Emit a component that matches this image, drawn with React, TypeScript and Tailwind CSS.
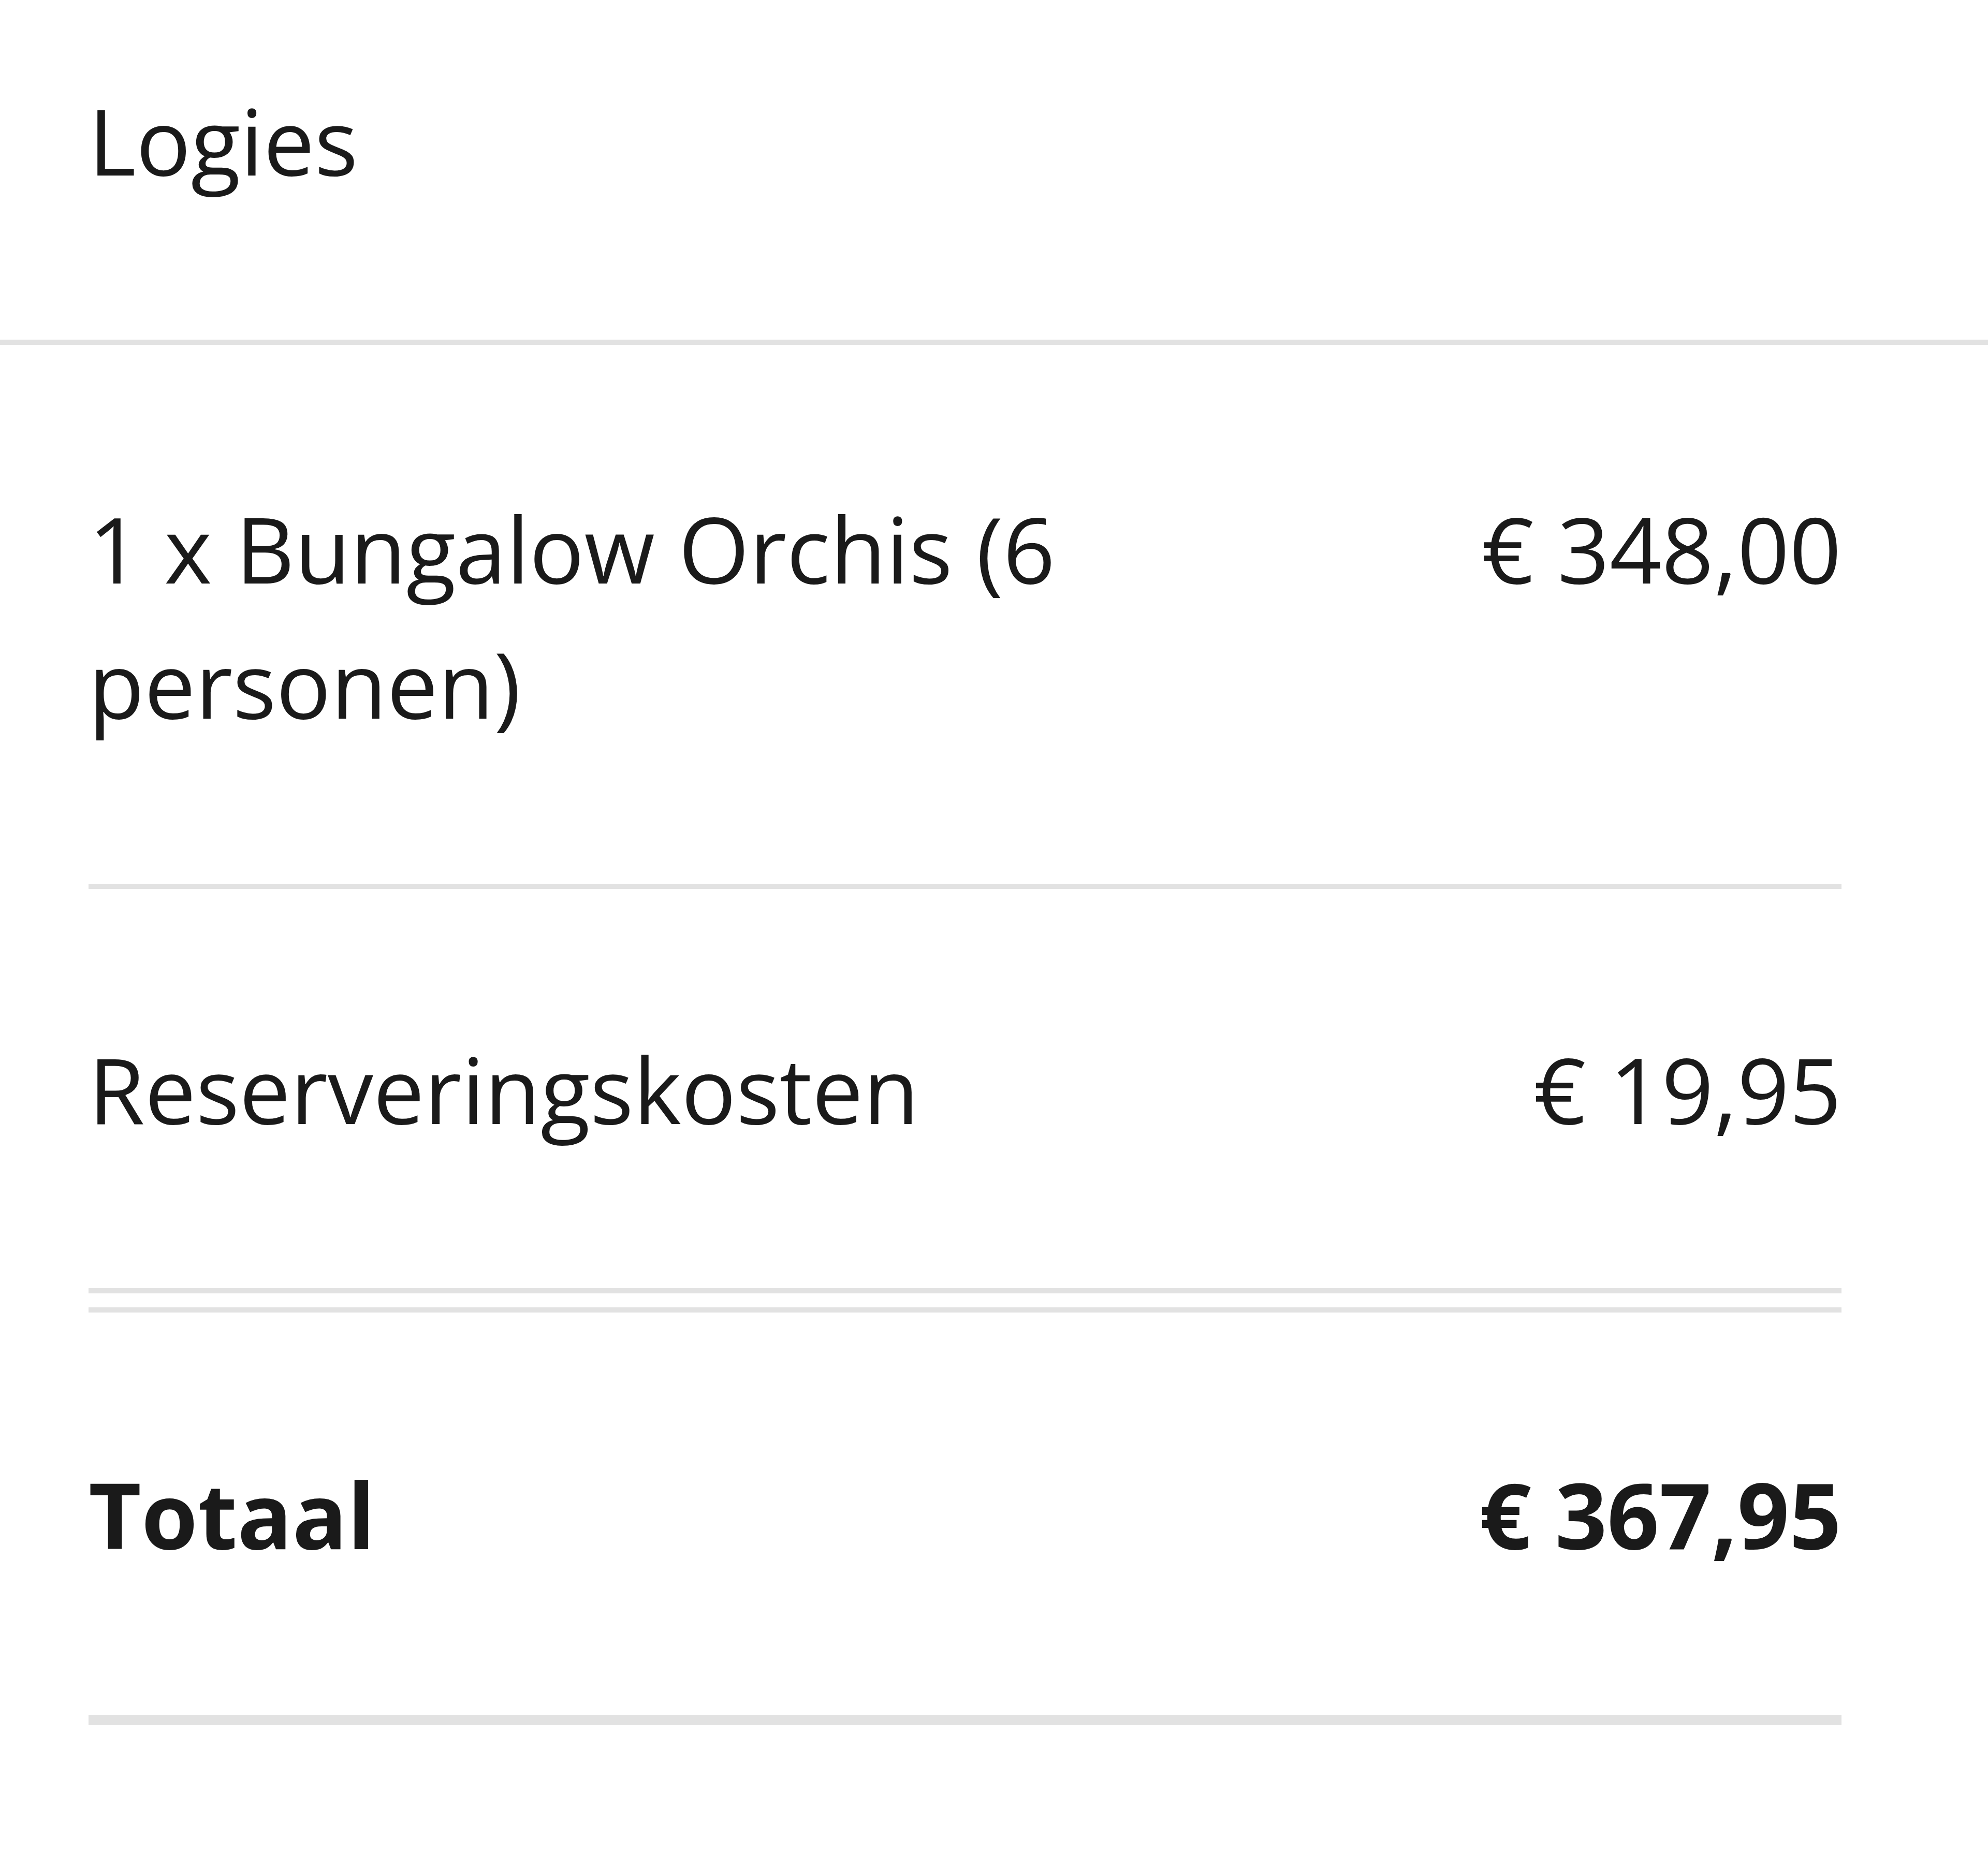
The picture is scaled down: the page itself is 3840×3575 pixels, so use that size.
import React from "react";

const font = { fontFamily: '"Open Sans", "Noto Sans", Arial, sans-serif' };

export default function App() {
  return (
    <div
      className="w-[3840px] h-[3575px] bg-white text-[#1a1a1a] text-[176px] leading-[261px]"
      style={font}
    >
      <div className="pl-[171px] pt-[141px] pb-[254px] border-b-[10px] border-[#e2e2e2]">
        <div>Logies</div>
      </div>
      <div className="ml-[171px] w-[3386px]">
        <div className="flex justify-between pt-[263px] pb-[256px] border-b-[10px] border-[#e2e2e2]">
          <div className="w-[2300px]">1 x Bungalow Orchis (6 personen)</div>
          <div className="whitespace-nowrap text-right">€ 348,00</div>
        </div>
        <div className="flex justify-between pt-[256px] pb-[254px] border-b-[10px] border-[#e2e2e2]">
          <div>Reserveringskosten</div>
          <div className="whitespace-nowrap text-right">€ 19,95</div>
        </div>
        <div className="mt-[27px] flex justify-between pt-[259px] pb-[257px] border-t-[10px] border-b-[20px] border-[#e2e2e2] font-bold">
          <div>Totaal</div>
          <div className="whitespace-nowrap text-right">€ 367,95</div>
        </div>
      </div>
    </div>
  );
}
